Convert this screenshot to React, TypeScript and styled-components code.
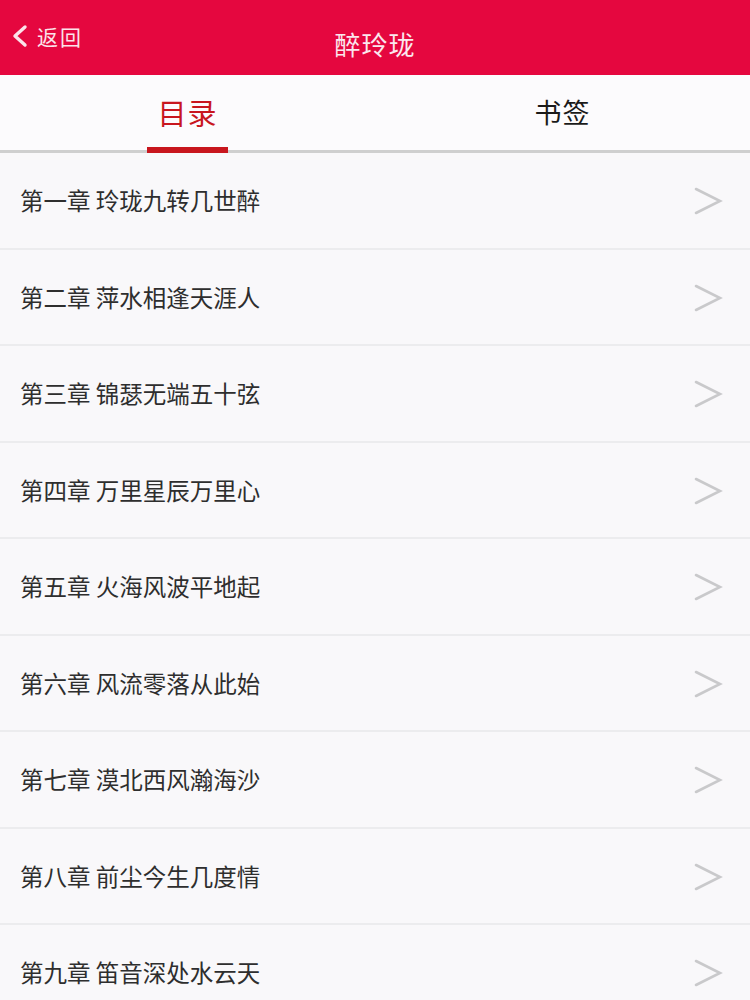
import styled, { createGlobalStyle } from 'styled-components'

const GlobalStyle = createGlobalStyle`
  html, body {
    margin: 0;
    padding: 0;
    background: #f9f8fa;
    font-family: "Noto Sans CJK SC", "Noto Sans", sans-serif;
  }
`

const Page = styled.div`
  width: 750px;
  height: 1000px;
  overflow: hidden;
  background: #f9f8fa;
`

const Header = styled.header`
  height: 75px;
  background: #e5073f;
  display: grid;
  grid-template-columns: 1fr auto 1fr;
  align-items: center;
  color: #fff;
`

const BackButton = styled.div`
  display: flex;
  align-items: center;
  gap: 8px;
  padding-left: 11px;
  margin-top: -4px;
  font-size: 21px;
  letter-spacing: 2px;
  color: #fbe3ea;
`

const Title = styled.h1`
  margin: 0;
  margin-top: 12px;
  font-size: 26px;
  font-weight: 400;
  letter-spacing: 1px;
  color: #fbe8ee;
`

const Tabs = styled.nav`
  height: 75px;
  display: flex;
  background: #fcfbfd;
  border-bottom: 3px solid #cfcfcf;
`

const Tab = styled.div<{ $active?: boolean }>`
  flex: 1;
  display: flex;
  justify-content: center;
  align-items: center;
  position: relative;
  font-size: ${({ $active }) => ($active ? '29px' : '27px')};
  color: ${({ $active }) => ($active ? '#c8161e' : '#1a1a1a')};
  letter-spacing: 1px;
  padding-bottom: 2px;

  &::after {
    content: '';
    display: ${({ $active }) => ($active ? 'block' : 'none')};
    position: absolute;
    left: 50%;
    bottom: -3px;
    width: 81px;
    margin-left: -41px;
    height: 6px;
    background: #c8161e;
  }
`

const List = styled.ul`
  list-style: none;
  margin: 0;
  padding: 0;
`

const Row = styled.li`
  height: 94.5px;
  display: flex;
  align-items: center;
  justify-content: space-between;
  padding: 0 27px 0 20px;
  border-bottom: 2px solid #ececee;
  font-size: 23.5px;
  color: #2e2e2e;
`

const Arrow = styled.svg`
  width: 30px;
  height: 30px;
  margin-top: 2px;
`

const chapters = [
  '第一章 玲珑九转几世醉',
  '第二章 萍水相逢天涯人',
  '第三章 锦瑟无端五十弦',
  '第四章 万里星辰万里心',
  '第五章 火海风波平地起',
  '第六章 风流零落从此始',
  '第七章 漠北西风瀚海沙',
  '第八章 前尘今生几度情',
  '第九章 笛音深处水云天',
]

export default function App() {
  return (
    <Page>
      <GlobalStyle />
      <Header>
        <BackButton>
          <svg width="18" height="24" viewBox="0 0 18 24">
            <path d="M14 3 L4 12 L14 21" fill="none" stroke="#fbe3ea" strokeWidth="3.4" strokeLinecap="round" strokeLinejoin="round" />
          </svg>
          返回
        </BackButton>
        <Title>醉玲珑</Title>
        <div />
      </Header>
      <Tabs>
        <Tab $active>目录</Tab>
        <Tab>书签</Tab>
      </Tabs>
      <List>
        {chapters.map((c) => (
          <Row key={c}>
            {c}
            <Arrow viewBox="0 0 30 30">
              <path d="M3 3 L27 15 L3 27" fill="none" stroke="#c9c9cb" strokeWidth="2.6" strokeLinecap="round" />
            </Arrow>
          </Row>
        ))}
      </List>
    </Page>
  )
}
